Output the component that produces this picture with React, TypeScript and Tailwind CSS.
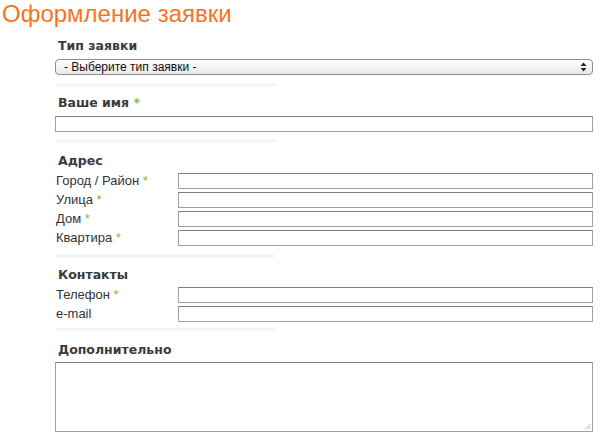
import React from "react";

const Star = () => <span className="text-[#76c043]"> *</span>;

const Sep = () => (
  <div className="h-[4px] w-[220px] bg-[linear-gradient(to_bottom,#ffffff,#eeeeee,#ffffff)]" />
);

const Input = () => (
  <div className="h-[16px] w-full border border-[#a0a0a0] border-t-[#808080] bg-white" />
);

const Heading = ({ children, mt }: { children: React.ReactNode; mt: string }) => (
  <div className={`${mt} pl-[3px] text-[12.5px] leading-[16px] font-bold text-[#3a3a3a] font-['DejaVu_Sans',Verdana,sans-serif]`}>
    {children}
  </div>
);

const Row = ({ label, star }: { label: string; star?: boolean }) => (
  <div className="flex items-center h-[16px]">
    <div className="w-[123px] pl-[1px] text-[13px] leading-[16px] text-[#333]">
      {label}
      {star && <Star />}
    </div>
    <div className="flex-1">
      <Input />
    </div>
  </div>
);

export default function App() {
  return (
    <div className="w-[600px] h-[437px] bg-white overflow-hidden font-['Liberation_Sans',Arial,sans-serif]">
      <h1 className="pl-[2px] text-[24px] leading-[28px] text-[#f37521]">
        Оформление заявки
      </h1>
      <div className="ml-[55px] w-[538px]">
        <Heading mt="mt-[10px]">Тип заявки</Heading>
        <div className="mt-[5px] h-[16px] rounded-[4px] border border-[#8d8d8d] bg-[linear-gradient(to_bottom,#ffffff,#e9e9e9)] flex items-center justify-between pl-[8px] pr-[5px]">
          <span className="text-[12px] leading-[14px] text-[#111]">- Выберите тип заявки -</span>
          <svg width="7" height="10" viewBox="0 0 7 10">
            <path d="M3.5 0.5 L6.5 4 L0.5 4 Z" fill="#222" />
            <path d="M3.5 9.5 L6.5 6 L0.5 6 Z" fill="#222" />
          </svg>
        </div>
        <div className="mt-[8px]"><Sep /></div>

        <Heading mt="mt-[8px]">Ваше имя<Star /></Heading>
        <div className="mt-[5px]"><Input /></div>
        <div className="mt-[7px]"><Sep /></div>

        <Heading mt="mt-[10px]">Адрес</Heading>
        <div className="mt-[4px] flex flex-col gap-[3px]">
          <Row label="Город / Район" star />
          <Row label="Улица" star />
          <Row label="Дом" star />
          <Row label="Квартира" star />
        </div>
        <div className="mt-[8px]"><Sep /></div>

        <Heading mt="mt-[9px]">Контакты</Heading>
        <div className="mt-[4px] flex flex-col gap-[3px]">
          <Row label="Телефон" star />
          <Row label="e-mail" />
        </div>
        <div className="mt-[5px]"><Sep /></div>

        <Heading mt="mt-[11px]">Дополнительно</Heading>
        <div className="mt-[4px] relative h-[70px] border border-[#a0a0a0] border-t-[#808080] bg-white">
          <svg className="absolute right-[1px] bottom-[1px]" width="7" height="7" viewBox="0 0 7 7">
            <path d="M6.5 1 L1 6.5 M6.5 4 L4 6.5" stroke="#999" strokeWidth="0.8" />
          </svg>
        </div>
      </div>
    </div>
  );
}
